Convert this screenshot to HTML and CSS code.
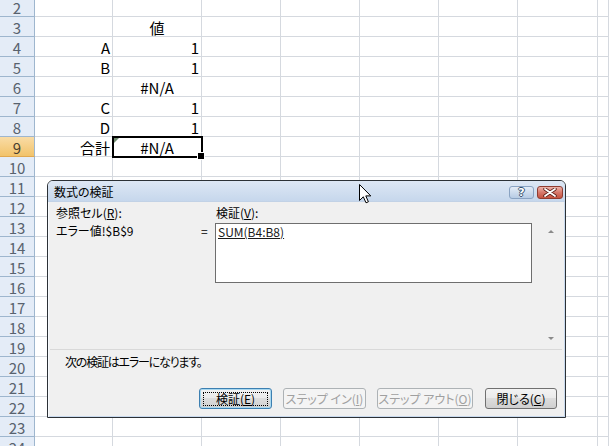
FILE: index.html
```html
<!DOCTYPE html>
<html lang="ja">
<head>
<meta charset="utf-8">
<title>数式の検証</title>
<link rel="stylesheet" href="styles.css">
</head>
<body>
<div class="sheet">
  <div class="rh">2</div><div></div><div></div><div></div><div></div><div></div><div></div><div></div><div></div>
  <div class="rh">3</div><div></div><div class="ctr">値</div><div></div><div></div><div></div><div></div><div></div><div></div>
  <div class="rh">4</div><div>A</div><div>1</div><div></div><div></div><div></div><div></div><div></div><div></div>
  <div class="rh">5</div><div>B</div><div>1</div><div></div><div></div><div></div><div></div><div></div><div></div>
  <div class="rh">6</div><div></div><div class="ctr">#N/A</div><div></div><div></div><div></div><div></div><div></div><div></div>
  <div class="rh">7</div><div>C</div><div>1</div><div></div><div></div><div></div><div></div><div></div><div></div>
  <div class="rh">8</div><div>D</div><div>1</div><div></div><div></div><div></div><div></div><div></div><div></div>
  <div class="rh act">9</div><div>合計</div><div class="ctr sel">#N/A</div><div></div><div></div><div></div><div></div><div></div><div></div>
  <div class="rh">10</div><div></div><div></div><div></div><div></div><div></div><div></div><div></div><div></div>
  <div class="rh">11</div><div></div><div></div><div></div><div></div><div></div><div></div><div></div><div></div>
  <div class="rh">12</div><div></div><div></div><div></div><div></div><div></div><div></div><div></div><div></div>
  <div class="rh">13</div><div></div><div></div><div></div><div></div><div></div><div></div><div></div><div></div>
  <div class="rh">14</div><div></div><div></div><div></div><div></div><div></div><div></div><div></div><div></div>
  <div class="rh">15</div><div></div><div></div><div></div><div></div><div></div><div></div><div></div><div></div>
  <div class="rh">16</div><div></div><div></div><div></div><div></div><div></div><div></div><div></div><div></div>
  <div class="rh">17</div><div></div><div></div><div></div><div></div><div></div><div></div><div></div><div></div>
  <div class="rh">18</div><div></div><div></div><div></div><div></div><div></div><div></div><div></div><div></div>
  <div class="rh">19</div><div></div><div></div><div></div><div></div><div></div><div></div><div></div><div></div>
  <div class="rh">20</div><div></div><div></div><div></div><div></div><div></div><div></div><div></div><div></div>
  <div class="rh">21</div><div></div><div></div><div></div><div></div><div></div><div></div><div></div><div></div>
  <div class="rh">22</div><div></div><div></div><div></div><div></div><div></div><div></div><div></div><div></div>
  <div class="rh">23</div><div></div><div></div><div></div><div></div><div></div><div></div><div></div><div></div>
  <div class="rh">24</div><div></div><div></div><div></div><div></div><div></div><div></div><div></div><div></div>
</div>

<div class="dlg">
  <div class="tbar">
    <span class="ttl">数式の検証</span>
    <div class="tbtns">
      <span class="tb help">?</span>
      <span class="tb close"><svg width="14" height="9" viewBox="0 0 14 9"><path d="M2 1 L12 8 M12 1 L2 8" stroke="#5a1d16" stroke-width="3.4" stroke-linecap="round"/><path d="M2 1 L12 8 M12 1 L2 8" stroke="#fff" stroke-width="1.8" stroke-linecap="round"/></svg></span>
    </div>
  </div>
  <div class="dbody">
    <div class="upper">
      <div class="refcol">
        <div>参照セル(<u>R</u>):</div>
        <div>エラー値!$B$9</div>
      </div>
      <div class="eq">=</div>
      <div class="evalcol">
        <div class="elabel">検証(<u>V</u>):</div>
        <div class="tbox"><u>SUM(B4:B8)</u></div>
      </div>
      <div class="sb">
        <span class="arr up"></span>
        <span class="arr dn"></span>
      </div>
    </div>
    <div class="sep"></div>
    <div class="status">次の検証はエラーになります。</div>
    <div class="btns">
      <button class="btn def w1"><span class="focus">検証(<u>E</u>)</span></button>
      <button class="btn dis w2">ステップ イン(<u>I</u>)</button>
      <button class="btn dis w3">ステップ アウト(<u>O</u>)</button>
      <button class="btn w4">閉じる(<u>C</u>)</button>
    </div>
  </div>
</div>

<svg class="cursor" width="13" height="20" viewBox="0 0 13 20"><path d="M0.5 0.5 L0.5 16.5 L4.3 12.8 L7 18.8 L9.4 17.8 L6.8 11.9 L11.8 11.9 Z" fill="#fff" stroke="#000" stroke-width="1" stroke-linejoin="round"/></svg>
</body>
</html>
```

FILE: styles.css
```css
* { box-sizing: border-box; margin: 0; padding: 0; }
html, body { width: 609px; height: 446px; overflow: hidden; background: #fff; }
body { position: relative; font-family: "Noto Sans CJK JP", sans-serif; }

.sheet {
  display: grid;
  grid-template-columns: 35px 78px 89px 79px 79px 79px 79px 80px 1fr;
  grid-template-rows: 17px;
  grid-auto-rows: 20px;
  font-size: 15px;
  line-height: 15px;
  color: #000;
}
.sheet > div {
  border-right: 1px solid #d5d9df;
  border-bottom: 1px solid #d5d9df;
  display: flex;
  align-items: flex-end;
  justify-content: flex-end;
  padding: 0 2px 1px 0;
  white-space: nowrap;
}
.sheet > .rh {
  background: #e4ecf7;
  border-color: #9eb6ce;
  justify-content: center;
  color: #58626e;
  padding: 0 0 1px 0;
}
.sheet > .rh.act {
  background: linear-gradient(#f9dca6, #f2c36a);
  border-bottom-color: #e0a850;
  color: #4a4030;
}
.sheet > .ctr { justify-content: center; padding-right: 0; }
.sheet > .sel {
  position: relative;
  outline: 2px solid #000;
  outline-offset: -1px;
}
.sheet > .sel::before {
  content: "";
  position: absolute;
  left: 1px;
  top: 1px;
  border-top: 5px solid #6f8a6f;
  border-right: 5px solid transparent;
}
.sheet > .sel::after {
  content: "";
  position: absolute;
  right: -4px;
  bottom: -4px;
  width: 6px;
  height: 6px;
  background: #000;
  border: 1px solid #fff;
}

.dlg {
  position: absolute;
  left: 47px;
  top: 180px;
  width: 519px;
  height: 238px;
  border: 1px solid #2c3136;
  border-radius: 6px 6px 0 0;
  background: #f0f0f0;
  box-shadow: inset 1px 0 0 #f8fbfe, inset -1px 0 0 #c9daee, inset 0 -1px 0 #c9daee;
  display: flex;
  flex-direction: column;
  font-size: 12px;
  line-height: 18px;
  font-feature-settings: "palt";
  color: #000;
}
.tbar {
  height: 21px;
  flex: none;
  display: flex;
  align-items: flex-start;
  background: linear-gradient(#dde7f4, #c6d7ec);
  border-radius: 5px 5px 0 0;
  border-bottom: 1px solid #c2d2e6;
}
.ttl { padding: 2px 0 0 6px; line-height: 18px; color: #000; }
.tbtns { margin-left: auto; margin-right: 2px; margin-top: 5px; display: flex; gap: 3px; }
.tb {
  width: 25px;
  height: 13px;
  border-radius: 3px;
  display: flex;
  align-items: center;
  justify-content: center;
}
.help {
  background: linear-gradient(#e3ecf7, #b7cbe4);
  border: 1px solid #8aa3c2;
  color: #fff;
  font: bold 11px/11px "DejaVu Sans", sans-serif;
  text-shadow: 1px 0 0 #35506e, -1px 0 0 #35506e, 0 1px 0 #35506e, 0 -1px 0 #35506e;
}
.close {
  width: 26px;
  background: linear-gradient(#ecb3aa, #d7786b 50%, #c5523f);
  border: 1px solid #8f3c31;
}

.dbody { flex: 1; display: flex; flex-direction: column; padding-top: 2px; }
.upper { height: 144px; display: flex; padding-left: 8px; flex: none; }
.refcol { width: 145px; }
.eq { width: 14px; padding-top: 18px; }
.evalcol { width: 317px; }
.elabel { padding-left: 1px; }
.tbox {
  margin-top: 1px;
  height: 60px;
  background: #fff;
  border: 1px solid #6e6e6e;
  padding-left: 2px;
  line-height: 15px;
  color: #1a1a1a;
}
.sb {
  width: 18px;
  margin-left: 10px;
  margin-top: 19px;
  height: 124px;
  display: flex;
  flex-direction: column;
  justify-content: space-between;
  align-items: center;
}
.arr { width: 0; height: 0; border-left: 3px solid transparent; border-right: 3px solid transparent; margin: 7px 0; }
.arr.up { border-bottom: 3px solid #8a8a8a; }
.arr.dn { border-top: 3px solid #8a8a8a; }

.sep { margin: 1px 3px 0 2px; border-top: 1px solid #d9d9d9; flex: none; }
.status { padding-left: 17px; margin-top: 3px; letter-spacing: -1.2px; }
.btns { display: flex; justify-content: flex-end; gap: 11px; padding-right: 8px; margin-top: 17px; }
.btn {
  height: 21px;
  font: inherit;
  font-size: 12px;
  line-height: 16px;
  font-feature-settings: "palt";
  border: 1px solid #707070;
  border-radius: 3px;
  background: linear-gradient(#f3f3f3 0%, #ebebeb 45%, #dddddd 50%, #cfcfcf 100%);
  color: #000;
  display: flex;
  align-items: center;
  justify-content: center;
  padding: 0;
}
.btn.def {
  border-color: #3c7fb1;
  box-shadow: inset 0 0 0 1px #a8d8f0;
}
.btn.dis {
  border-color: #adb2b5;
  background: #f4f4f4;
  color: #a0a0a0;
}
.focus { border: 1px dotted #000; width: calc(100% - 6px); height: 14px; line-height: 12px; display: block; }
.w1 { width: 73px; }
.w2 { width: 83px; }
.w3 { width: 96px; margin-right: 1px; }
.w4 { width: 72px; }

.cursor { position: absolute; left: 359px; top: 184px; }
```
